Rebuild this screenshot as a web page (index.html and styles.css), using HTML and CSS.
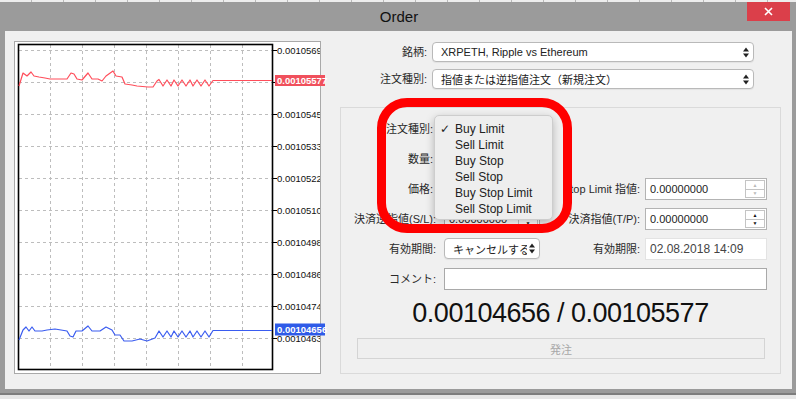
FILE: index.html
```html
<!DOCTYPE html>
<html lang="ja">
<head>
    <meta charset="UTF-8">
    <meta name="viewport" content="width=device-width, initial-scale=1.0">
    <title>Order</title>
    <link rel="stylesheet" href="styles.css">
</head>
<body>
    <div class="backdrop"></div>
    <div class="window">
        <div class="titlebar">
            <span class="title">Order</span>
            <div class="close">
                <svg width="9" height="9" viewBox="0 0 9 9"><path d="M1 1 L8 8 M8 1 L1 8" stroke="#fff" stroke-width="1.6"/></svg>
            </div>
        </div>
        <div class="client">
            <!-- tick chart -->
            <div class="chart-panel">
                <svg width="305" height="331" viewBox="15 42 305 331">
                    <defs>
                        <clipPath id="axis"><rect x="272" y="42" width="48" height="331"/></clipPath>
                    </defs>
                    <g class="grid">
                        <path d="M19 50.5H272 M19 82.5H272 M19 114.5H272 M19 146.5H272 M19 178.5H272 M19 210.5H272 M19 242.5H272 M19 274.5H272 M19 306.5H272 M19 338.5H272"/>
                        <path d="M50.5 45V369 M82.5 45V369 M114.5 45V369 M146.5 45V369 M178.5 45V369 M210.5 45V369 M242.5 45V369"/>
                    </g>
                    <rect x="18.5" y="44.5" width="254" height="325" fill="none" stroke="#000" stroke-width="1.6"/>
                    <path class="ticks" d="M272 50.5H277 M272 82.5H277 M272 114.5H277 M272 146.5H277 M272 178.5H277 M272 210.5H277 M272 242.5H277 M272 274.5H277 M272 306.5H277 M272 338.5H277"/>
                    <g class="axis-label" clip-path="url(#axis)">
                        <text x="277" y="54">0.00105691</text>
                        <text x="277" y="118">0.00105456</text>
                        <text x="277" y="150">0.00105338</text>
                        <text x="277" y="182">0.00105220</text>
                        <text x="277" y="214">0.00105102</text>
                        <text x="277" y="246">0.00104984</text>
                        <text x="277" y="278">0.00104867</text>
                        <text x="277" y="310">0.00104749</text>
                        <text x="277" y="342">0.00104631</text>
                    </g>
                    <polyline class="ask" points="19,86 23,73 27,76 31,72 34,76 39,77 45,78 50,79 67,79 71,73 74,74 77,79 82,80 88,73 92,79 98,79 102,81 106,76 113,71 116,76 122,77 125,84 132,85 137,86 148,87 153,87 157,81 159,79.5 163,86 167,80 171,86 174,80 178,86 182,80 186,86 190,80 193,86 197,80 201,86 205,80 209,86 213,80.5 272,80.5"/>
                    <polyline class="bid" points="19,340 23,330 26,327 29,331 32,327 35,331 42,331 47,330 55,329 67,331 70,336 73,337 76,331 82,331 88,326 92,331 100,331 106,327 112,330 115,335 120,335 124,341 132,341 140,339 147,341 155,338 159,331 163,337 167,331 171,337 174,331 178,337 182,331 186,337 190,331 193,337 197,331 201,337 205,331 209,337 213,330.5 272,330.5"/>
                    <rect x="275" y="75" width="50" height="11" fill="#f0505c"/>
                    <text class="price-label" x="277" y="84">0.00105577</text>
                    <rect x="275" y="323.5" width="50" height="12" fill="#2f5be8"/>
                    <text class="price-label" x="277" y="333">0.00104656</text>
                </svg>
            </div>

            <div class="order-form">
                <div class="symbol-rows">
                    <div class="label">銘柄:</div>
                    <div class="select">
                        <span class="text">XRPETH, Ripple vs Ethereum</span>
                        <svg class="arrows" width="6" height="11" viewBox="0 0 6 11"><path d="M0 4.5L3 0.5L6 4.5Z M0 6.5L3 10.5L6 6.5Z" fill="#222"/></svg>
                    </div>
                    <div class="label">注文種別:</div>
                    <div class="select">
                        <span class="text">指値または逆指値注文（新規注文）</span>
                        <svg class="arrows" width="6" height="11" viewBox="0 0 6 11"><path d="M0 4.5L3 0.5L6 4.5Z M0 6.5L3 10.5L6 6.5Z" fill="#222"/></svg>
                    </div>
                </div>

                <div class="group">
                    <div class="fields">
                        <div class="label tight">注文種別:</div>
                        <div class="select small"><span class="text">Buy Limit</span></div>
                        <div></div><div></div>

                        <div class="label tight">数量:</div>
                        <div class="input"><span>0.01</span></div>
                        <div></div><div></div>

                        <div class="label tight">価格:</div>
                        <div class="input"><span>0.00000000</span></div>
                        <div class="label right">Stop Limit 指値:</div>
                        <div class="input">
                            <span>0.00000000</span>
                            <div class="spin off"><span>&#9650;</span><span>&#9660;</span></div>
                        </div>

                        <div class="label">決済逆指値(S/L):</div>
                        <div class="input">
                            <span>0.00000000</span>
                            <div class="spin"><span>&#9650;</span><span>&#9660;</span></div>
                        </div>
                        <div class="label right">決済指値(T/P):</div>
                        <div class="input">
                            <span>0.00000000</span>
                            <div class="spin"><span>&#9650;</span><span>&#9660;</span></div>
                        </div>

                        <div class="label">有効期間:</div>
                        <div class="select small">
                            <span class="text">キャンセルするまで</span>
                            <svg class="arrows" width="6" height="11" viewBox="0 0 6 11"><path d="M0 4.5L3 0.5L6 4.5Z M0 6.5L3 10.5L6 6.5Z" fill="#222"/></svg>
                        </div>
                        <div class="label right">有効期限:</div>
                        <div class="input plain"><span>02.08.2018 14:09</span></div>

                        <div class="label">コメント:</div>
                        <div class="input comment"></div>
                    </div>
                    <div class="quote">0.00104656 / 0.00105577</div>
                    <button class="submit" disabled>発注</button>
                </div>
            </div>
        </div>
    </div>

    <!-- open order type menu -->
    <div class="menu">
        <div class="menu-item checked">Buy Limit</div>
        <div class="menu-item">Sell Limit</div>
        <div class="menu-item">Buy Stop</div>
        <div class="menu-item">Sell Stop</div>
        <div class="menu-item">Buy Stop Limit</div>
        <div class="menu-item">Sell Stop Limit</div>
    </div>
    <div class="ring"></div>
</body>
</html>
```

FILE: styles.css
```css
/* page */
body {
    margin: 0;
    height: 399px;
    overflow: hidden;
    background: #e6e6e6;
    font-family: "Liberation Sans", "Noto Sans CJK JP", sans-serif;
    font-size: 11px;
    color: #222;
}
.backdrop {
    height: 2px;
    background: repeating-linear-gradient(90deg, #ededed 0 31px, #b8b8b8 31px 32px);
}

/* window frame */
.window {
    height: 393px;
    box-sizing: border-box;
    background: #9b9b9b;
    border-bottom: 2px solid #7d7d7d;
    display: flex;
    flex-direction: column;
}
.titlebar {
    height: 29px;
    flex-shrink: 0;
    position: relative;
    display: flex;
    align-items: center;
    justify-content: center;
}
.title {
    font-size: 15px;
    color: #111;
    margin-left: 2px;
}
.close {
    position: absolute;
    top: 0;
    right: 6px;
    width: 43px;
    height: 19px;
    background: #db3f4a;
    display: flex;
    align-items: center;
    justify-content: center;
}
.close svg {
    display: block;
}
.client {
    flex: 1;
    margin: 0 4px 4px 5px;
    padding: 10px 11px 15px 9px;
    background: #f0f0f0;
    display: flex;
}

/* chart */
.chart-panel {
    width: 307px;
    height: 333px;
    flex-shrink: 0;
    box-sizing: border-box;
    border: 1px solid #a9a9a9;
    background: #fff;
}
.chart-panel svg {
    display: block;
    overflow: visible;
}
.grid path {
    stroke: #bdbdbd;
    stroke-width: 1;
    stroke-dasharray: 3 3;
    fill: none;
}
.ticks {
    stroke: #000;
    stroke-width: 1;
}
.axis-label text {
    font: 9.5px "Liberation Sans", sans-serif;
    fill: #111;
}
.price-label {
    font: bold 9.5px "Liberation Sans", sans-serif;
    fill: #fff;
}
.ask, .bid {
    fill: none;
    stroke-width: 1.2;
    stroke-linejoin: round;
}
.ask {
    stroke: #ff4d5a;
}
.bid {
    stroke: #3a5cf0;
}

/* form */
.order-form {
    flex: 1;
    margin-left: 19px;
    display: flex;
    flex-direction: column;
}
.symbol-rows {
    display: grid;
    grid-template-columns: 87px 322px;
    grid-auto-rows: 20px;
    column-gap: 5px;
    row-gap: 7px;
    margin-top: 1px;
}
.label {
    text-align: right;
    white-space: nowrap;
    color: #2a2a2a;
}
.symbol-rows .label {
    line-height: 20px;
}
.select {
    box-sizing: border-box;
    border: 1px solid #b9b9b9;
    border-radius: 4px;
    background: #fff;
    display: flex;
    align-items: center;
    padding: 0 4px 0 8px;
    box-shadow: 0 1px 1px rgba(0, 0, 0, 0.06);
}
.select .text {
    flex: 1;
    overflow: hidden;
    white-space: nowrap;
}
.select.small {
    padding-left: 8px;
    height: 21px;
}
.arrows {
    display: block;
    flex-shrink: 0;
    margin-left: 2px;
}

.group {
    margin-top: 18px;
    flex: 1;
    border: 1px solid #dadada;
    padding: 10px 13px 0 4px;
}
.fields {
    display: grid;
    grid-template-columns: 99px 96px 105px 122px;
    grid-auto-rows: 22px;
    row-gap: 8px;
}
.fields .label {
    line-height: 22px;
    padding-right: 8px;
}
.fields .label.tight {
    padding-right: 11px;
}
.fields .label.right {
    padding-right: 5px;
}
.input {
    box-sizing: border-box;
    border: 1px solid #b3b3b3;
    background: #fff;
    display: flex;
    align-items: center;
    padding-left: 4px;
}
.input.plain {
    border-color: #e3e3e3;
    color: #444;
    font-size: 12px;
}
.input.comment {
    grid-column: 2 / 5;
    border-color: #a9a9a9;
}
.spin {
    margin-left: auto;
    margin-right: 1px;
    width: 20px;
    height: 18px;
    box-sizing: border-box;
    border: 1px solid #c4c4c4;
    display: flex;
    flex-direction: column;
    font-size: 5px;
    color: #111;
}
.spin span {
    flex: 1;
    display: flex;
    align-items: center;
    justify-content: center;
}
.spin span + span {
    border-top: 1px solid #c4c4c4;
}
.spin.off {
    color: #b9b9b9;
}

.quote {
    margin-top: 8px;
    padding-left: 9px;
    height: 30px;
    line-height: 30px;
    text-align: center;
    font-size: 27px;
    letter-spacing: -0.5px;
    color: #111;
}
.submit {
    display: block;
    margin: 10px 0 0 12px;
    width: 408px;
    height: 21px;
    border: 1px solid #d4d4d4;
    background: #efefef;
    color: #a8a8a8;
    font-family: inherit;
    font-size: 11px;
}

/* overlays */
.menu {
    position: absolute;
    left: 434px;
    top: 115px;
    width: 119px;
    height: 105px;
    box-sizing: border-box;
    padding-top: 5px;
    background: #eeeeee;
    border: 1px solid #cdcdcd;
    border-radius: 5px;
    box-shadow: 0 3px 8px rgba(0, 0, 0, 0.25);
    font-size: 12px;
}
.menu-item {
    position: relative;
    height: 16px;
    line-height: 16px;
    padding-left: 20px;
    color: #222;
}
.menu-item.checked::before {
    content: "\2713";
    position: absolute;
    left: 5px;
    font-family: "DejaVu Sans", sans-serif;
    font-size: 12px;
    font-weight: bold;
}
.ring {
    position: absolute;
    left: 377px;
    top: 98px;
    width: 195px;
    height: 135px;
    box-sizing: border-box;
    border: 9px solid #ff0000;
    border-radius: 30px;
}
```
